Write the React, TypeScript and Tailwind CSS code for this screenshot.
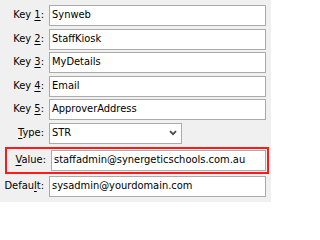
const rows = [
  { pre: "Key ", key: "1", post: ":", value: "Synweb" },
  { pre: "Key ", key: "2", post: ":", value: "StaffKiosk" },
  { pre: "Key ", key: "3", post: ":", value: "MyDetails" },
  { pre: "Key ", key: "4", post: ":", value: "Email" },
  { pre: "Key ", key: "5", post: ":", value: "ApproverAddress" },
];

function Label({ pre, k, post }: { pre: string; k: string; post: string }) {
  return (
    <div className="w-[44px] shrink-0 text-right whitespace-nowrap">
      {pre}
      <span className="underline underline-offset-2">{k}</span>
      {post}
    </div>
  );
}

function Field({ value, className = "" }: { value: string; className?: string }) {
  return (
    <div
      className={`h-[21px] flex items-center bg-white border border-[#ababab] pl-[2px] whitespace-nowrap overflow-hidden ${className}`}
    >
      {value}
    </div>
  );
}

export default function App() {
  return (
    <div
      className="w-[271px] h-[202px] bg-[#f0f0f0] text-black text-[11px] overflow-hidden"
      style={{ fontFamily: '"DejaVu Sans Condensed", "DejaVu Sans", sans-serif' }}
    >
      <div className="flex flex-col pt-[5px] gap-[2.5px]">
        {rows.map((r) => (
          <div key={r.key} className="flex items-center gap-[5px]">
            <Label pre={r.pre} k={r.key} post={r.post} />
            <Field value={r.value} className="w-[217px]" />
          </div>
        ))}
        <div className="flex items-center gap-[5px]">
          <Label pre="" k="T" post="ype:" />
          <div className="h-[21px] w-[133px] shrink-0 flex items-center justify-between bg-white border border-[#ababab] pl-[2px] pr-[4px]">
            <span>STR</span>
            <svg width="8" height="6" viewBox="0 0 8 6">
              <path d="M1 1.2l3 3 3-3" fill="none" stroke="#4a4a4a" strokeWidth="1.8" />
            </svg>
          </div>
        </div>
      </div>
      <div className="mt-[3px] ml-[5px] w-[264px] border-2 border-[#ff1a1a] p-px pl-0">
        <div className="flex items-center gap-[5px] -ml-[5px]">
          <Label pre="" k="V" post="alue:" />
          <Field value="staffadmin@synergeticschools.com.au" className="w-[217px]" />
        </div>
      </div>
      <div className="mt-[2.5px] flex items-center gap-[5px]">
        <Label pre="Defau" k="l" post="t:" />
        <Field value="sysadmin@yourdomain.com" className="w-[217px]" />
      </div>
    </div>
  );
}
